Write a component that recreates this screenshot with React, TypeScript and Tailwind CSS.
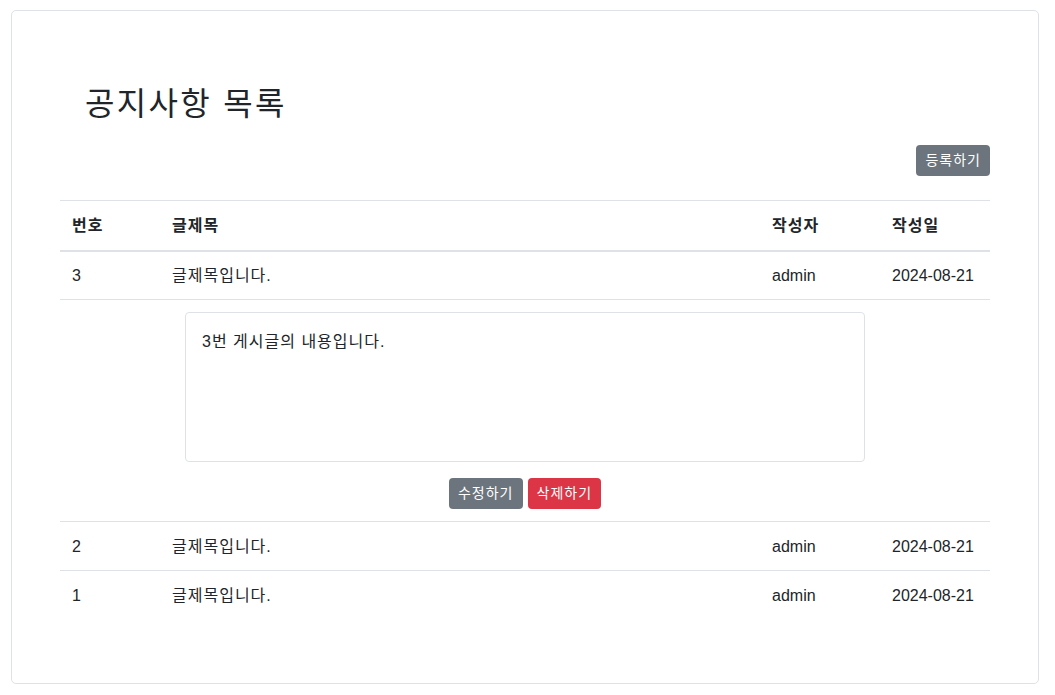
import React, { useState } from 'react';

type Notice = {
  id: number;
  title: string;
  writer: string;
  date: string;
  content: string;
};

const notices: Notice[] = [
  { id: 3, title: '글제목입니다.', writer: 'admin', date: '2024-08-21', content: '3번 게시글의 내용입니다.' },
  { id: 2, title: '글제목입니다.', writer: 'admin', date: '2024-08-21', content: '2번 게시글의 내용입니다.' },
  { id: 1, title: '글제목입니다.', writer: 'admin', date: '2024-08-21', content: '1번 게시글의 내용입니다.' },
];

// hangul in the fallback font runs narrower than the original, so widen it a little
const ko = 'tracking-[1px]';

export default function App() {
  const [openId, setOpenId] = useState<number | null>(3);

  return (
    <div
      className="min-h-screen bg-white text-[#212529] pt-[10px] pl-[11px] pr-[16px]"
      style={{ fontFamily: '"Liberation Sans", "Noto Sans CJK KR", sans-serif' }}
    >
      <div className="h-[674px] border border-[#dee2e6] rounded-[5px] pt-[74px] px-[48px]">
        <h1 className="ml-[25px] text-[32px] leading-[38px] font-normal tracking-[2.3px]">공지사항 목록</h1>

        <div className="flex justify-end mt-[22px]">
          <button className={`h-[31px] px-[9px] rounded-[4px] bg-[#6c757d] text-white text-[14px] leading-[31px] ${ko}`}>
            등록하기
          </button>
        </div>

        <table className="w-full mt-[24px] border-collapse text-[16px]">
          <thead>
            <tr className="border-t border-b-2 border-[#dee2e6] h-[50px]">
              <th className={`w-[100px] px-3 pt-[2px] text-left font-bold ${ko}`}>번호</th>
              <th className={`px-3 pt-[2px] text-left font-bold ${ko}`}>글제목</th>
              <th className={`w-[120px] px-3 pt-[2px] text-left font-bold ${ko}`}>작성자</th>
              <th className={`w-[110px] px-3 pt-[2px] text-left font-bold ${ko}`}>작성일</th>
            </tr>
          </thead>
          <tbody>
            {notices.map((n, i) => (
              <React.Fragment key={n.id}>
                <tr
                  className={`h-[49px] cursor-pointer ${i < notices.length - 1 || openId === n.id ? 'border-b border-[#dee2e6]' : ''}`}
                  onClick={() => setOpenId(openId === n.id ? null : n.id)}
                >
                  <td className="px-3 pt-[2px]">{n.id}</td>
                  <td className={`px-3 pt-[2px] ${ko}`}>{n.title}</td>
                  <td className="px-3 pt-[2px]">{n.writer}</td>
                  <td className="px-3 pt-[2px]">{n.date}</td>
                </tr>
                {openId === n.id && (
                  <tr className="border-b border-[#dee2e6]">
                    <td colSpan={4} className="pt-[12px] pb-[12px]">
                      <div className={`mx-auto w-[680px] h-[150px] border border-[#dee2e6] rounded-[4px] px-[16px] pt-[17px] text-[16px] leading-[24px] ${ko}`}>
                        {n.content}
                      </div>
                      <div className="flex justify-center gap-[5px] mt-[16px]">
                        <button className={`h-[31px] px-[9px] rounded-[4px] bg-[#6c757d] text-white text-[14px] leading-[31px] ${ko}`}>
                          수정하기
                        </button>
                        <button className={`h-[31px] px-[9px] rounded-[4px] bg-[#dc3545] text-white text-[14px] leading-[31px] ${ko}`}>
                          삭제하기
                        </button>
                      </div>
                    </td>
                  </tr>
                )}
              </React.Fragment>
            ))}
          </tbody>
        </table>
      </div>
    </div>
  );
}
